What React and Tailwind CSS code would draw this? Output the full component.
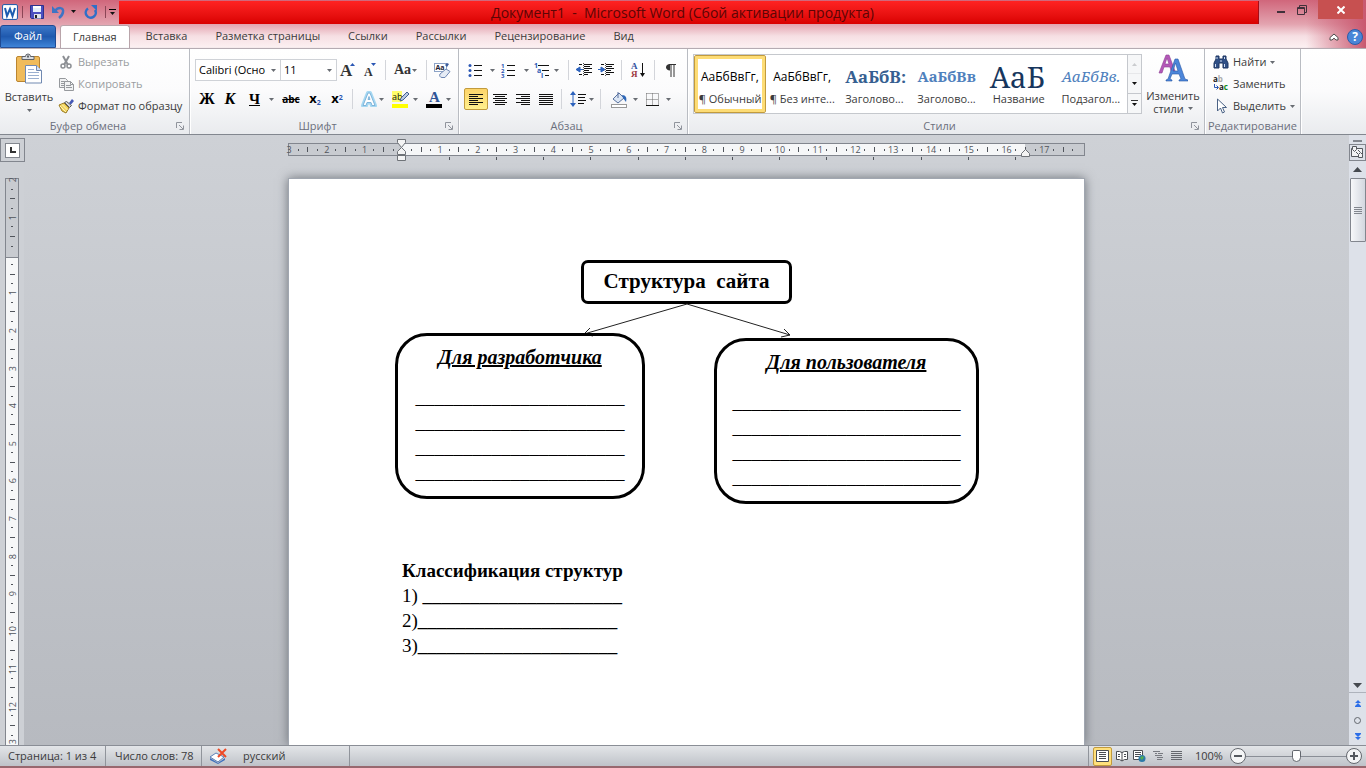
import { useState } from "react";

const TABS = ["Главная", "Вставка", "Разметка страницы", "Ссылки", "Рассылки", "Рецензирование", "Вид"];

const STYLES = [
  { sample: "АаБбВвГг,", name: "¶ Обычный", look: "text-xs text-black font-['Open_Sans',sans-serif]" },
  { sample: "АаБбВвГг,", name: "¶ Без инте...", look: "text-xs text-black font-['Open_Sans',sans-serif]" },
  { sample: "АаБбВ:", name: "Заголово...", look: "text-[17px] font-bold text-[#365f91] font-['Noto_Serif','DejaVu_Serif','Liberation_Serif',serif]" },
  { sample: "АаБбВв", name: "Заголово...", look: "text-[15px] font-bold text-[#4f81bd] font-['Noto_Serif','Liberation_Serif',serif]" },
  { sample: "АаБ", name: "Название", look: "text-[29px] text-[#17365d] font-['Noto_Serif','Liberation_Serif',serif]" },
  { sample: "АаБбВв.", name: "Подзагол...", look: "text-[15px] italic text-[#4f81bd] font-['Noto_Serif','Liberation_Serif',serif]" },
];

export default function App() {
  const [tab, setTab] = useState("Главная");
  const [style, setStyle] = useState(0);

  return (
    <div className="flex h-screen flex-col overflow-hidden bg-[#cbced3] font-['Open_Sans','Noto_Sans',sans-serif] text-[11px] text-[#3b3b3b]">
      <header className="shrink-0 bg-[linear-gradient(to_left,#c9586f,#c9586f00_60px),linear-gradient(to_bottom,#d0667b,#e3a3af_24px,#f6dfe3_36px,#fcf1f2)]">
        <TitleBar />
        <nav className="flex h-[23px] items-stretch">
          <button className="w-14 rounded-t-[3px] border border-[#1e4a94] bg-gradient-to-b from-[#3c78c8] via-[#1f59ae] to-[#3f84d8] text-white">Файл</button>
          <div className="ml-1 flex" role="tablist">
            {TABS.map((t) => (
              <button
                key={t}
                role="tab"
                aria-selected={t === tab}
                onClick={() => setTab(t)}
                className={
                  t === tab
                    ? "mr-[2px] rounded-t-[3px] border border-b-0 border-[#b9a4aa] bg-white px-3 whitespace-nowrap"
                    : "px-[14px] whitespace-nowrap"
                }
              >
                {t}
              </button>
            ))}
          </div>
          <div className="ml-auto flex items-center gap-2 pr-[3px]">
            <button aria-label="Свернуть ленту">
              <svg width="10" height="8" viewBox="0 0 10 8" fill="#fff" stroke="#4b4b4b">
                <path d="M1 4.5 5 1l4 3.5V7H7L5 5.2 3 7H1z" />
              </svg>
            </button>
            <button aria-label="Справка" className="flex size-4 items-center justify-center rounded-full border border-[#2c5ca8] bg-[#4a86d8] text-xs font-bold text-white">?</button>
          </div>
        </nav>
      </header>

      <Ribbon style={style} setStyle={setStyle} />

      <main className="flex min-h-0 flex-1 bg-gradient-to-b from-[#ced1d6] to-[#b7bac0]">
        <div className="flex w-6 shrink-0 flex-col bg-[#cdd0d5] pt-[3px]">
          <button aria-label="Выбор табуляции" className="flex h-6 w-[25px] shrink-0 items-center justify-center border border-[#82868e]">
            <span className="flex size-[15px] items-center justify-center border border-[#82868e] bg-white">
              <svg width="6" height="6"><path d="M1 0v5h5" fill="none" stroke="#333" strokeWidth="2" /></svg>
            </span>
          </button>
          <VerticalRuler />
        </div>

        <div className="flex min-w-0 flex-1 flex-col overflow-hidden pt-2">
          <HorizontalRuler />
          <Page />
        </div>

        <ScrollBar />
      </main>

      <StatusBar />
    </div>
  );
}

function TitleBar() {
  return (
    <div className="flex h-[25px] items-start">
      <div className="flex h-[23px] w-[119px] shrink-0 items-center pl-[2px]">
        <svg width="16" height="16" viewBox="0 0 16 16">
          <rect x=".5" y=".5" width="15" height="15" rx="1.5" fill="#eaf2fb" stroke="#2b5ea9" />
          <rect x="2" y="2" width="12" height="12" fill="#fff" />
          <path d="M3 4l2 8 3-7 2.500 7L13 4" fill="none" stroke="#1d5cb0" strokeWidth="2" />
        </svg>
        <span className="mr-[7px] ml-1 h-3 w-px bg-[#8b4656]" />
        <button aria-label="Сохранить">
          <svg width="14" height="14" viewBox="0 0 14 14">
            <path d="M.5.5h13v13h-12l-1-1z" fill="#4b50c0" stroke="#2d318c" />
            <rect x="3" y="1" width="8" height="6" fill="#e4effc" />
            <rect x="3" y="1" width="8" height="2" fill="#fff" />
            <rect x="4" y="9" width="7" height="4.500" fill="#dfe3ea" />
            <rect x="5" y="10" width="2" height="3" fill="#222" />
          </svg>
        </button>
        <button aria-label="Отменить" className="ml-2">
          <svg width="14" height="14" viewBox="0 0 14 14" fill="none">
            <path d="M3 6C6 2 12 2 11 7c-.4 3-2 4.500-4 6" stroke="#3e74c4" strokeWidth="2.500" />
            <path d="M0 1v7h7z" fill="#3e74c4" />
          </svg>
        </button>
        <span className="ml-[5px]"><Caret dark /></span>
        <button aria-label="Повторить" className="ml-2">
          <svg width="14" height="14" viewBox="0 0 14 14" fill="none">
            <path d="M4 3.500A5 5 0 1 0 11 5" stroke="#2f6fc8" strokeWidth="2.500" />
            <path d="M7 0h6v6z" fill="#2f6fc8" />
          </svg>
        </button>
        <span className="mr-[3px] ml-[7px] h-3 w-px bg-[#8b4656]" />
        <button aria-label="Настройка панели" className="flex flex-col items-center gap-[2px]">
          <span className="h-px w-[7px] bg-black" />
          <Caret dark />
        </button>
      </div>
      <h1 className="mt-px h-[23px] min-w-0 flex-1 border-r border-[#a50d18] bg-gradient-to-b from-[#ff2222] to-[#d90000] pr-3 text-center text-sm leading-[23px] whitespace-pre text-[#5c0505]">
        Документ1  -  Microsoft Word (Сбой активации продукта)
      </h1>
      <div className="flex h-[19px] w-[107px] shrink-0 items-stretch">
        <button aria-label="Свернуть" className="flex w-[26px] items-center justify-end pt-1 pl-4"><span className="h-[2px] w-2 bg-[#40303a]" /></button>
        <button aria-label="Восстановить" className="flex w-[33px] items-center justify-center">
          <svg width="10" height="10" fill="none" stroke="#40303a">
            <path d="M.5 2.500h7v7h-7zM.5 3.500h7M2.500 2V.5h7v7H8" />
          </svg>
        </button>
        <button aria-label="Закрыть" className="flex w-[45px] items-center justify-center bg-[#c75050]">
          <svg width="8" height="8" stroke="#fff" strokeWidth="2"><path d="M.5.5l7 7M7.500.5l-7 7" /></svg>
        </button>
      </div>
    </div>
  );
}

function Caret({ dark }) {
  return (
    <svg width="5" height="3" viewBox="0 0 5 3" className="shrink-0">
      <path d="M0 0h5L2.500 3z" fill={dark ? "#111" : "#686c72"} />
    </svg>
  );
}

function Sep() {
  return <span className="mx-1 h-5 w-px shrink-0 bg-[#d3d5da]" />;
}

function Group({ title, className, launcher = true, children }) {
  return (
    <section className={`flex shrink-0 flex-col border-r border-[#b9bcc2] shadow-[1px_0_0_#fff] ${className}`}>
      <div className="flex-1">{children}</div>
      <div className="flex h-4 items-center">
        <span className="flex-1 text-center leading-4 whitespace-nowrap text-[#6b6f7c]">{title}</span>
        {launcher && (
          <button aria-label={title} className="mr-[5px]">
            <svg width="8" height="8" fill="none" stroke="#90949c">
              <path d="M.5 6V.5H6M3 3l4 4M7.500 3.500v4h-4" />
            </svg>
          </button>
        )}
      </div>
    </section>
  );
}

function Tool({ label, className = "w-[22px]", arrow, children }) {
  return (
    <button aria-label={label} title={label} className={`flex h-[22px] shrink-0 items-center justify-center text-black ${className}`}>
      {children}
      {arrow && <span className="ml-auto"><Caret /></span>}
    </button>
  );
}

function Combo({ label, value, className }) {
  return (
    <label className={`relative flex h-[22px] items-center border border-[#cfd2d7] bg-white ${className}`}>
      <select aria-label={label} className="h-full w-full appearance-none bg-transparent pr-3 pl-[3px] text-black outline-none">
        <option>{value}</option>
      </select>
      <span className="pointer-events-none absolute right-1 flex"><Caret /></span>
    </label>
  );
}

function Ribbon({ style, setStyle }) {
  return (
    <div className="flex h-[87px] shrink-0 border-t border-b border-t-[#b5abb2] border-b-[#82878f] bg-gradient-to-b from-white via-[#fbfbfc] to-[#e9ebee] shadow-[0_1px_2px_#9b9fa6]">
      <Group title="Буфер обмена" className="w-[190px]">
        <div className="flex">
          <button className="flex w-[58px] flex-col items-center pt-1">
            <PasteIcon />
            <span className="mt-1 leading-4">Вставить</span>
            <span className="mt-1"><Caret /></span>
          </button>
          <div className="flex flex-col pt-[2px]">
            <SmallButton icon={<CutIcon />} text="Вырезать" disabled />
            <SmallButton icon={<CopyIcon />} text="Копировать" disabled />
            <SmallButton icon={<BrushIcon />} text="Формат по образцу" />
          </div>
        </div>
      </Group>

      <Group title="Шрифт" className="w-[269px]">
        <div className="flex items-center pt-[10px] pl-[5px]">
          <Combo label="Шрифт" value="Calibri (Осно" className="w-[86px]" />
          <Combo label="Размер шрифта" value="11" className="w-[56px] border-l-0" />
          <Tool label="Увеличить размер">
            <GrowIcon up />
          </Tool>
          <Tool label="Уменьшить размер">
            <GrowIcon />
          </Tool>
          <Sep />
          <Tool label="Регистр" className="w-[27px] pl-1" arrow>
            <span className="font-['Liberation_Serif',serif] text-sm font-bold text-[#333]">Aa</span>
          </Tool>
          <span className="w-[5px]" />
          <Sep />
          <Tool label="Очистить формат"><EraserIcon /></Tool>
        </div>
        <div className="flex items-center pt-[7px] pl-[6px] font-['Liberation_Serif',serif] font-bold">
          <Tool label="Полужирный"><span className="text-base">Ж</span></Tool>
          <Tool label="Курсив" className="w-6"><span className="text-base italic">К</span></Tool>
          <Tool label="Подчеркнутый" className="w-8 pl-[7px]" arrow><span className="text-[15px] leading-4 underline">Ч</span></Tool>
          <Tool label="Зачеркнутый" className="w-[30px] pl-1"><span className="font-['Open_Sans',sans-serif] text-[10px] line-through">abc</span></Tool>
          <Tool label="Подстрочный">
            <span className="font-['Open_Sans',sans-serif] text-[13px]">x<sub className="text-[7px] text-[#2a56b4]">2</sub></span>
          </Tool>
          <Tool label="Надстрочный">
            <span className="font-['Open_Sans',sans-serif] text-[13px]">x<sup className="text-[7px] text-[#2a56b4]">2</sup></span>
          </Tool>
          <Sep />
          <Tool label="Эффекты" className="w-[27px] pl-1" arrow>
            <svg width="16" height="16" viewBox="0 0 16 16">
              <path d="M2 14.500 7 2h2l5 12.500h-3L10 11.500H6l-1 3zM7 8.500h2L8 5.500z" fill="#fff" stroke="#a5d8f2" strokeWidth="4" strokeLinejoin="round" />
              <path d="M2 14.500 7 2h2l5 12.500h-3L10 11.500H6l-1 3zM7 8.500h2L8 5.500z" fill="#fff" stroke="#7fb4da" />
            </svg>
          </Tool>
          <Tool label="Цвет выделения" className="w-[34px] pl-2" arrow>
            <svg width="18" height="17" viewBox="0 0 18 17" className="overflow-visible">
              <rect width="10" height="11" fill="#ffff6a" />
              <text x="0" y="9" fontSize="9" fontWeight="normal" fontFamily="Open Sans" fill="#111">ab</text>
              <path d="m8 10 1-3 6-6 2 2-6 6z" fill="#b9c9e2" stroke="#405f92" />
              <rect y="13" width="16" height="4" fill="#ff0" />
            </svg>
          </Tool>
          <Tool label="Цвет текста" className="w-[33px] pl-2" arrow>
            <svg width="16" height="17" viewBox="0 0 16 17" className="overflow-visible">
              <text x="3" y="11" fontSize="15" fontWeight="bold" fontFamily="Liberation Serif" fill="#2f5597">A</text>
              <rect y="13" width="16" height="4" fill="#000" />
            </svg>
          </Tool>
        </div>
      </Group>

      <Group title="Абзац" className="w-[229px]">
        <div className="flex items-center pt-[10px] pl-[5px]">
          <Tool label="Маркеры" className="w-[31px] pl-1" arrow><ListIcon marks={["•", "•", "•"]} /></Tool>
          <Tool label="Нумерация" className="w-[34px] pl-[6px]" arrow><ListIcon marks={["1", "2", "3"]} /></Tool>
          <Tool label="Многоуровневый список" className="w-[30px] pl-1" arrow>
            <svg width="17" height="15" viewBox="0 0 17 15" className="overflow-visible">
              <path d="M5 2.500h11M9 7.500h7M12 12.500h4" stroke="#111" />
              <g fontSize="7" fontWeight="bold" fontFamily="Open Sans" fill="#2a56b4">
                <text x="1" y="5">1</text><text x="4" y="10">a</text><text x="8" y="15">i</text>
              </g>
            </svg>
          </Tool>
          <span className="w-[5px]" />
          <Sep />
          <Tool label="Уменьшить отступ"><IndentIcon /></Tool>
          <Tool label="Увеличить отступ"><IndentIcon right /></Tool>
          <Sep />
          <Tool label="Сортировка" className="w-6">
            <svg width="14" height="16" viewBox="0 0 14 16" className="overflow-visible">
              <g fontSize="9" fontWeight="bold" fontFamily="Liberation Serif">
                <text x="0" y="7" fill="#2f4f9f">А</text><text x="0" y="15" fill="#9c3540">Я</text>
              </g>
              <path d="M11.500 1v11" stroke="#111" />
              <path d="M9 11h5l-2.500 4z" fill="#111" />
            </svg>
          </Tool>
          <Sep />
          <Tool label="Непечатаемые знаки" className="w-6">
            <svg width="10" height="13" viewBox="0 0 10 13">
              <path d="M4 0C1.500 0 0 1.500 0 3.200S1.500 6.500 4 6.500z" fill="#333" />
              <path d="M3 .5h7M5 0v13M8 0v13" stroke="#333" strokeWidth="1" fill="none" />
            </svg>
          </Tool>
        </div>
        <div className="flex items-center pt-[7px] pl-[5px]">
          <Tool label="По левому краю" className="w-6 rounded-[2px] border border-[#c29b3d] bg-gradient-to-b from-[#fdd469] to-[#fff08d]"><AlignIcon kind="left" /></Tool>
          <Tool label="По центру" className="w-[23px]"><AlignIcon kind="center" /></Tool>
          <Tool label="По правому краю" className="w-[23px]"><AlignIcon kind="right" /></Tool>
          <Tool label="По ширине" className="w-[23px]"><AlignIcon kind="full" /></Tool>
          <Sep />
          <Tool label="Интервал" className="w-7 pl-1" arrow>
            <svg width="17" height="16" viewBox="0 0 17 16">
              <path d="M3 3v10" stroke="#2c62bd" strokeWidth="1" />
              <path d="M3 0l3 4H0zM3 16l3-4H0z" fill="#2c62bd" />
              <path d="M8 3.500h8M8 6.500h7M8 9.500h8M8 12.500h6" stroke="#111" />
            </svg>
          </Tool>
          <span className="w-[2px]" />
          <Sep />
          <Tool label="Заливка" className="w-[33px] pl-[6px]" arrow>
            <svg width="17" height="17" viewBox="0 0 17 17">
              <path d="m2 8 6-6 5 5-6 5z" fill="#dce6f4" stroke="#58719e" />
              <path d="M7 1v6" stroke="#58719e" />
              <path d="M11 4c4 0 5 3 4 7l-3-4z" fill="#2f68b8" />
              <rect x=".5" y="13.500" width="15" height="3" fill="#fff" stroke="#999" />
            </svg>
          </Tool>
          <Tool label="Границы" className="w-[33px] pl-2" arrow>
            <svg width="13" height="13" viewBox="0 0 13 13" fill="none">
              <path d="M.5.500h12M.5 6.500h12M.5.500v12M6.500.500v12M12.500.500v12" stroke="#666" strokeDasharray="1 1" />
              <path d="M0 12.500h13" stroke="#111" />
            </svg>
          </Tool>
        </div>
      </Group>

      <Group title="Стили" className="max-w-[517px] min-w-0 flex-1 shrink">
        <div className="flex pt-[5px] pl-[5px]">
          <div className="flex h-[60px] min-w-0 flex-1 border border-[#c5c8cd] bg-white">
            <div className="grid min-w-0 flex-1 grid-cols-6 overflow-hidden">
              {STYLES.map((s, i) => (
                <button
                  key={i}
                  onClick={() => setStyle(i)}
                  className={
                    i === style
                      ? "flex flex-col rounded-[2px] border border-[#c29b3d] px-[2px] shadow-[inset_0_0_0_3px_#fddc75]"
                      : "flex flex-col border border-transparent px-[2px]"
                  }
                >
                  <span className={`flex h-[35px] w-full items-center px-1 pt-[6px] leading-none whitespace-nowrap ${s.look}`}>{s.sample}</span>
                  <span className="w-full text-center leading-4 whitespace-nowrap">{s.name}</span>
                </button>
              ))}
            </div>
            <div className="grid w-[14px] shrink-0 grid-rows-3 divide-y divide-[#c5c8cd] border-l border-[#c5c8cd] bg-[#f6f7f8]">
              <button aria-label="Вверх" className="flex items-center justify-center opacity-30"><span className="rotate-180"><Caret /></span></button>
              <button aria-label="Вниз" className="flex items-center justify-center"><Caret dark /></button>
              <button aria-label="Дополнительно" className="flex flex-col items-center justify-center gap-[2px]"><span className="h-px w-[7px] bg-[#333]" /><Caret dark /></button>
            </div>
          </div>
          <button className="flex w-[62px] shrink-0 flex-col items-center leading-[13px]">
            <svg width="30" height="28" viewBox="0 0 30 28">
              <path d="M1 19 8 1h3l6 16h-4l-1-4H6l-2 6zM7 10h4L9 4z" fill="#b457b8" stroke="#8d3f94" strokeWidth=".6" />
              <path d="M8 27v-1l2-1L17 5h3l7 20 3 1v1h-9v-1l2-1-2-5h-7l-2 5 2 1v1zM15 17h5l-2.500-8z" fill="#4c86da" stroke="#2a57a4" strokeWidth=".6" />
            </svg>
            <span className="mt-[7px]">Изменить</span>
            <span className="flex items-center gap-1">стили <Caret /></span>
          </button>
        </div>
      </Group>

      <Group title="Редактирование" className="w-[96px]" launcher={false}>
        <div className="flex flex-col pt-[2px] pl-2">
          <SmallButton icon={<FindIcon />} text="Найти" arrow />
          <SmallButton
            icon={
              <svg width="16" height="16" viewBox="0 0 16 16" fontFamily="Open Sans" fontWeight="bold" fontSize="8" className="overflow-visible">
                <text x="0" y="6" fill="#222">a<tspan fill="#aaa">b</tspan></text>
                <text x="6" y="14" fill="#222">a<tspan fill="#118a22">c</tspan></text>
                <path d="M1.500 8v3.500H5M3.500 9.500l2 2-2 2" fill="none" stroke="#2a56b4" />
              </svg>
            }
            text="Заменить"
          />
          <SmallButton
            icon={
              <svg width="16" height="16" viewBox="0 0 16 16">
                <path d="M4.500 1v12l3-3 2 5 2-1-2-4.500h4z" fill="#fff" stroke="#4a6285" />
              </svg>
            }
            text="Выделить"
            arrow
          />
        </div>
      </Group>
    </div>
  );
}

function SmallButton({ icon, text, disabled, arrow }) {
  return (
    <button disabled={disabled} className="flex h-[22px] items-center gap-1 whitespace-nowrap disabled:text-[#9a9da1]">
      {icon}
      <span>{text}</span>
      {arrow && <Caret />}
    </button>
  );
}

function PasteIcon() {
  return (
    <svg width="28" height="32" viewBox="0 0 28 32">
      <rect x="1.500" y="3.500" width="23" height="25" rx="1.500" fill="#f0bb5a" stroke="#bb8530" />
      <path d="M7 6.500V3.500h3.500a2.500 2.500 0 0 1 5 0H19v3z" fill="#d9dce1" stroke="#5e6269" />
      <rect x="12" y="2.500" width="2" height="2" fill="#5e6269" />
      <path d="M10.500 12.500h11l5 5v12.500h-16z" fill="#fff" stroke="#7089b1" />
      <path d="M21.500 12.500v5h5" fill="#d7e3f4" stroke="#7089b1" />
      <path d="M13 16.500h6M13 19.500h11M13 22.500h11M13 25.500h11" stroke="#9bb0d0" />
    </svg>
  );
}

function CutIcon() {
  return (
    <svg width="16" height="16" viewBox="0 0 16 16" fill="none" stroke="#8c8f94">
      <path d="M5 2l5 9M11 2l-5 9" strokeWidth="2" />
      <circle cx="5" cy="12" r="2" strokeWidth="1.500" />
      <circle cx="11" cy="12" r="2" strokeWidth="1.500" />
    </svg>
  );
}

function CopyIcon() {
  return (
    <svg width="16" height="16" viewBox="0 0 16 16" fill="#f1f2f3" stroke="#96999d">
      <path d="M1.500 2.500h6l2 2v7h-8zM3 5.500h5M3 7.500h5M3 9.500h5" />
      <path d="M6.500 5.500h6l3 3v6h-9zM8 9.500h5M8 11.500h6M12.500 5.500v3h3" />
    </svg>
  );
}

function BrushIcon() {
  return (
    <svg width="16" height="16" viewBox="0 0 16 16">
      <path d="M1 7l5-2 5 5-3 5-4-2z" fill="#f2d35c" stroke="#9a7b22" />
      <path d="M2 8l6 6M4 6.500l5.500 5.500" stroke="#fff5bd" />
      <path d="M6.500 4.500l5 5 2-2-5-4z" fill="#d5d8de" stroke="#555" />
      <path d="M11 5l3-4 2 2-3 3.500z" fill="#4457b5" />
    </svg>
  );
}

function FindIcon() {
  return (
    <svg width="16" height="14" viewBox="0 0 16 14">
      <path d="M3 1h3v3h4V1h3v3l2 4v5h-5V8H6v5H1V8l2-4z" fill="#2f4f86" stroke="#1e3763" />
      <path d="M2.500 9v3M11.500 9v3M4 2v2M11.500 2v2M7 6h2" stroke="#cfdcf2" />
    </svg>
  );
}

function GrowIcon({ up }) {
  return (
    <svg width="16" height="16" viewBox="0 0 16 16" className="overflow-visible">
      <text x={up ? 0 : 2} y="14" fontSize={up ? 17 : 12} fontWeight="bold" fontFamily="Liberation Serif" fill="#333">A</text>
      <path d={up ? "M10 4h5l-2.500-3z" : "M9 1h5l-2.500 3z"} fill="#2a56b4" />
    </svg>
  );
}

function EraserIcon() {
  return (
    <svg width="17" height="17" viewBox="0 0 17 17">
      <rect x=".5" y="1.500" width="12" height="8" fill="#fff" stroke="#8ca3c7" />
      <text x="1.500" y="8" fontSize="7" fontWeight="bold" fontFamily="Open Sans" fill="#223">Aa</text>
      <path d="M11 3l2-2 2 1-2 3z" fill="#3c5e9e" />
      <path d="M6 12l6-5 4 2.500-5 6H8c-2 0-3-2-2-3.500z" fill="#e6ecf6" stroke="#6f87b3" />
    </svg>
  );
}

function ListIcon({ marks }) {
  return (
    <svg width="15" height="15" viewBox="0 0 15 15" className="overflow-visible">
      {marks.map((m, i) =>
        m === "•" ? (
          <circle key={i} cx="2" cy={2.5 + i * 5} r="1.500" fill="#2a56b4" />
        ) : (
          <text key={i} x="0" y={5 + i * 5} fontSize="6" fontWeight="bold" fontFamily="Open Sans" fill="#2a56b4">{m}</text>
        )
      )}
      <path d="M6 2.500h8M6 7.500h8M6 12.500h8" stroke="#111" />
    </svg>
  );
}

function IndentIcon({ right }) {
  return (
    <svg width="17" height="14" viewBox="0 0 17 14">
      <path d="M3 1.500h3M8 1.500h8M8 3.500h6M8 5.500h8M8 7.500h5M8 9.500h8M3 11.500h3M8 11.500h4" stroke="#111" />
      <path d="M7.500 0v14" stroke="#555" strokeDasharray="1 1" />
      <path d={right ? "M0 6.500h4M3 4l4 2.500L3 9z" : "M3 6.500h4M4 4L0 6.500 4 9z"} fill="#2c62bd" stroke="#2c62bd" />
    </svg>
  );
}

function AlignIcon({ kind }) {
  const paths = {
    left: "M0 1.500h14M0 3.500h9M0 5.500h14M0 7.500h9M0 9.500h14M0 11.500h9",
    center: "M0 1.500h14M2 3.500h10M0 5.500h14M2 7.500h10M0 9.500h14M2 11.500h10",
    right: "M0 1.500h14M5 3.500h9M0 5.500h14M5 7.500h9M0 9.500h14M5 11.500h9",
    full: "M0 1.500h14M0 3.500h14M0 5.500h14M0 7.500h14M0 9.500h14M0 11.500h14",
  };
  return (
    <svg width="14" height="13" viewBox="0 0 14 13"><path d={paths[kind]} stroke="#111" /></svg>
  );
}

// One cell per centimetre, the label sits on the cell's leading edge
function HorizontalRuler() {
  const cells = Array.from({ length: 21 }, (_, i) => Math.abs(i - 3));
  return (
    <div className="relative mx-auto w-[797px] shrink-0">
      <div className="flex h-[13px] border border-[#82868e] bg-[linear-gradient(to_right,#c8cbd0_14.200%,#f6f7f8_14.200%,#f6f7f8_92.600%,#c8cbd0_92.600%)] pr-[2px] text-[9px] leading-none text-[#50545b]">
        {cells.map((n, i) => (
          <div key={i} className="flex flex-1 items-center">
            <span className="flex w-0 justify-center">{n !== 0 && <span>{n}</span>}</span>
            <span className="flex flex-1 items-center justify-evenly">
              <i className="h-[2px] w-px bg-[#50545b]" />
              <i className="h-[5px] w-px bg-[#50545b]" />
              <i className="h-[2px] w-px bg-[#50545b]" />
            </span>
          </div>
        ))}
      </div>
      <div className="flex h-[5px] w-[728px] justify-between pt-px pl-[161px]">
        {Array.from({ length: 13 }, (_, i) => <i key={i} className="h-[3px] w-px bg-[#50545b]" />)}
      </div>
      <svg width="9" height="23" viewBox="0 0 9 23" className="absolute -top-[4px] left-[109px]" fill="#f4f4f4" stroke="#6f7378">
        <path d="M.5.500h8v3l-4 5-4-5z" />
        <path d="M4.500 8.500l4 4v3h-8v-3z" />
        <path d="M.5 16.500h8v5h-8z" />
      </svg>
      <svg width="9" height="8" viewBox="0 0 9 8" className="absolute top-[6px] left-[733px]" fill="#f4f4f4" stroke="#6f7378">
        <path d="M4.500.5l4 4v3h-8v-3z" />
      </svg>
    </div>
  );
}

function VerticalRuler() {
  const cells = Array.from({ length: 16 }, (_, i) => Math.abs(i - 2));
  return (
    <div className="mt-4 ml-[5px] min-h-0 w-[14px] flex-1 overflow-hidden">
      <div className="flex h-[605px] flex-col border border-[#82868e] bg-[linear-gradient(to_bottom,#c8cbd0_78px,#82868e_78px,#82868e_79px,#f6f7f8_79px)] pt-px text-[9px] leading-none text-[#50545b]">
        {cells.map((n, i) => (
          <div key={i} className="flex flex-1 flex-col items-center">
            <span className="flex h-0 items-center">
              {n !== 0 && <span className="rotate-180 [writing-mode:vertical-rl]">{n}</span>}
            </span>
            <span className="flex flex-1 flex-col items-center justify-evenly">
              <i className="h-px w-[2px] bg-[#50545b]" />
              <i className="h-px w-[5px] bg-[#50545b]" />
              <i className="h-px w-[2px] bg-[#50545b]" />
            </span>
          </div>
        ))}
      </div>
    </div>
  );
}

function Page() {
  return (
    <article className="mx-auto mt-[17px] flex w-[797px] flex-1 shrink-0 flex-col border border-b-0 border-[#a0a6b0] bg-white font-['Liberation_Serif',serif] text-[19px] leading-[25px] text-black shadow-[0_0_10px_#6f737a]">
      <h2 className="mx-auto mt-[81px] h-11 w-[211px] rounded-[7px] border-[3px] border-black text-center text-[21px] leading-[37px] font-bold whitespace-pre">Структура  сайта</h2>
      <svg width="211" height="29" viewBox="0 0 211 29" className="mx-auto block overflow-visible" fill="none" stroke="#222">
        <path d="M106 0 3 30M9 24 3 30l9 2M106 0l103 31M203 25l6 6-9 2" />
      </svg>
      <div className="flex items-start gap-[69px] pl-[106px]">
        <Card title="Для разработчика" line="______________________" className="w-[250px]" />
        <Card title="Для пользователя" line="________________________" className="mt-[5px] w-[265px]" />
      </div>
      <div className="mt-[54px] pl-[113px]">
        <h3 className="font-bold">Классификация структур</h3>
        <p>1) <b>_____________________</b></p>
        <p>2)<b>_____________________</b></p>
        <p>3)<b>_____________________</b></p>
      </div>
    </article>
  );
}

function Card({ title, line, className }) {
  return (
    <section className={`h-[166px] rounded-[32px] border-[3px] border-black pt-[9px] text-center ${className}`}>
      <h3 className="mb-[15px] text-xl leading-[25px] font-bold italic underline decoration-2">{title}</h3>
      <p>{line}</p>
      <p>{line}</p>
      <p>{line}</p>
      <p>{line}</p>
    </section>
  );
}

function ScrollBar() {
  return (
    <div className="flex w-[17px] shrink-0 flex-col items-center bg-[#dde1e9] pt-[5px]">
      <span className="h-[2px] w-[9px] shrink-0 bg-[#82868e]" />
      <button aria-label="Линейка" className="mt-[2px] flex h-[17px] w-full shrink-0 items-center justify-center border border-[#82868e]">
        <svg width="13" height="13" viewBox="0 0 13 13" fill="#f2f3f5" stroke="#55595f">
          <path d="M.5 2.500h11v8H.5z" />
          <path d="M1.500.5h4v3l-2 2-2-2zM7.500 11.500h4v-3l-2-2-2 2zM5 6l2 2M7 4l2 2" />
        </svg>
      </button>
      <button aria-label="Прокрутить вверх" className="flex h-[17px] shrink-0 items-center">
        <svg width="9" height="5"><path d="M4.500 0 9 5H0z" fill="#45494f" /></svg>
      </button>
      <div className="flex h-16 w-4 shrink-0 flex-col items-center justify-center gap-px rounded-[1px] border border-[#82868e] bg-gradient-to-r from-[#f7f8fa] to-[#d3d7df]">
        <i className="h-px w-2 bg-[#82868e]" />
        <i className="h-px w-2 bg-[#82868e]" />
        <i className="h-px w-2 bg-[#82868e]" />
        <i className="h-px w-2 bg-[#82868e]" />
      </div>
      <button aria-label="Прокрутить вниз" className="mt-auto flex h-[15px] w-full items-center justify-center border-b border-[#aeb3bc]">
        <svg width="9" height="5"><path d="M0 0h9L4.500 5z" fill="#45494f" /></svg>
      </button>
      <div className="flex h-[52px] shrink-0 flex-col items-center justify-between pt-[7px] pb-[5px]">
        <button aria-label="Предыдущая страница">
          <svg width="6" height="7" fill="#2e6fe8"><path d="M3 0l3 3H0zM3 3l3 3H0zM0 6h6v1H0z" /></svg>
        </button>
        <button aria-label="Выбор объекта перехода" className="size-[7px] rounded-full border border-[#63676e]" />
        <button aria-label="Следующая страница">
          <svg width="6" height="7" fill="#2e6fe8"><path d="M0 0h6v1H0zM0 1h6L3 4zM0 4h6L3 7z" /></svg>
        </button>
      </div>
    </div>
  );
}

function StatusBar() {
  return (
    <footer className="flex h-[23px] shrink-0 items-center border-t border-b-2 border-t-[#8a8e96] border-b-[#98686f] bg-gradient-to-b from-[#e3e5e8] to-[#bfc3c9]">
      <span className="flex h-full w-[106px] items-center border-r border-[#90949b] pl-2 whitespace-nowrap">Страница: 1 из 4</span>
      <span className="flex h-full w-24 items-center border-r border-[#90949b] pl-[9px] whitespace-nowrap">Число слов: 78</span>
      <button className="flex h-full w-[148px] items-center gap-4 border-r border-[#90949b] pl-2">
        <svg width="17" height="16" viewBox="0 0 17 16">
          <path d="M0 9l6-4 8 4-6 5z" fill="#fff" stroke="#5b7fb5" />
          <path d="M0 10l8 5 7-5v2l-7 4-8-4z" fill="#3c6fbd" />
          <path d="M8 1l8 8M16 1L8 9" stroke="#ee4a26" strokeWidth="2" />
        </svg>
        русский
      </button>
      <div className="ml-auto flex h-full items-center border-l border-[#90949b] pl-[4px]">
        <button aria-label="Разметка страницы" className="flex h-[19px] w-[19px] items-center justify-center rounded-[2px] border border-[#c29b3d] bg-[#ffe07c]">
          <svg width="13" height="12" viewBox="0 0 13 12" fill="#fff" stroke="#4a4d52"><path d="M.5.500h12v11H.5zM3 2.500h7M3 4.500h7M3 6.500h7M3 8.500h7" /></svg>
        </button>
        <button aria-label="Режим чтения" className="ml-1">
          <svg width="12" height="12" viewBox="0 0 12 12" fill="#fff" stroke="#4a4d52"><path d="M.5 1.500h3l2.500 1 2.500-1h3v8h-3L6 11l-2.500-1.500h-3zM6 2v9M2 4.500h2M2 6.500h2M8 4.500h2M8 6.500h2" /></svg>
        </button>
        <button aria-label="Веб-документ" className="ml-[5px]">
          <svg width="13" height="12" viewBox="0 0 13 12"><path d="M.5.500h9v9h-9zM2 2.500h6M2 4.500h6M2 6.500h4" fill="#fff" stroke="#4a4d52" /><circle cx="9" cy="8.500" r="3.500" fill="#2d7aa8" /><path d="M7 8l2-2 2 1-2 3z" fill="#55b04a" /></svg>
        </button>
        <button aria-label="Структура" className="ml-[7px]">
          <svg width="10" height="10" viewBox="0 0 10 10" stroke="#777a80"><path d="M0 .5h7M2 2.500h2M5 2.500h5M2 4.500h7M4 6.500h6M4 8.500h5" /></svg>
        </button>
        <button aria-label="Черновик" className="ml-2">
          <svg width="11" height="10" viewBox="0 0 11 10" stroke="#65686e"><path d="M0 .5h11M0 2.500h11M0 4.500h11M0 6.500h11M0 8.500h11" /></svg>
        </button>
        <button className="ml-[13px] w-[31px] text-left">100%</button>
        <button aria-label="Уменьшить" className="ml-1 flex size-4 items-center justify-center rounded-full border border-[#63676e] bg-[#f4f5f6]"><i className="h-[2px] w-2 bg-[#55595f]" /></button>
        <input
          type="range"
          aria-label="Масштаб"
          min="0"
          max="100"
          defaultValue="50"
          className="h-4 w-[100px] appearance-none bg-[linear-gradient(#8a8e96,#8a8e96)] bg-[length:100%_1px] bg-center bg-no-repeat [&::-webkit-slider-thumb]:h-3 [&::-webkit-slider-thumb]:w-[9px] [&::-webkit-slider-thumb]:appearance-none [&::-webkit-slider-thumb]:rounded-t-[2px] [&::-webkit-slider-thumb]:rounded-b-[5px] [&::-webkit-slider-thumb]:border [&::-webkit-slider-thumb]:border-[#63676e] [&::-webkit-slider-thumb]:bg-white"
        />
        <button aria-label="Увеличить" className="mr-1 flex size-4 items-center justify-center rounded-full border border-[#63676e] bg-[#f4f5f6]">
          <svg width="8" height="8" stroke="#55595f" strokeWidth="2"><path d="M4 0v8M0 4h8" /></svg>
        </button>
      </div>
    </footer>
  );
}
